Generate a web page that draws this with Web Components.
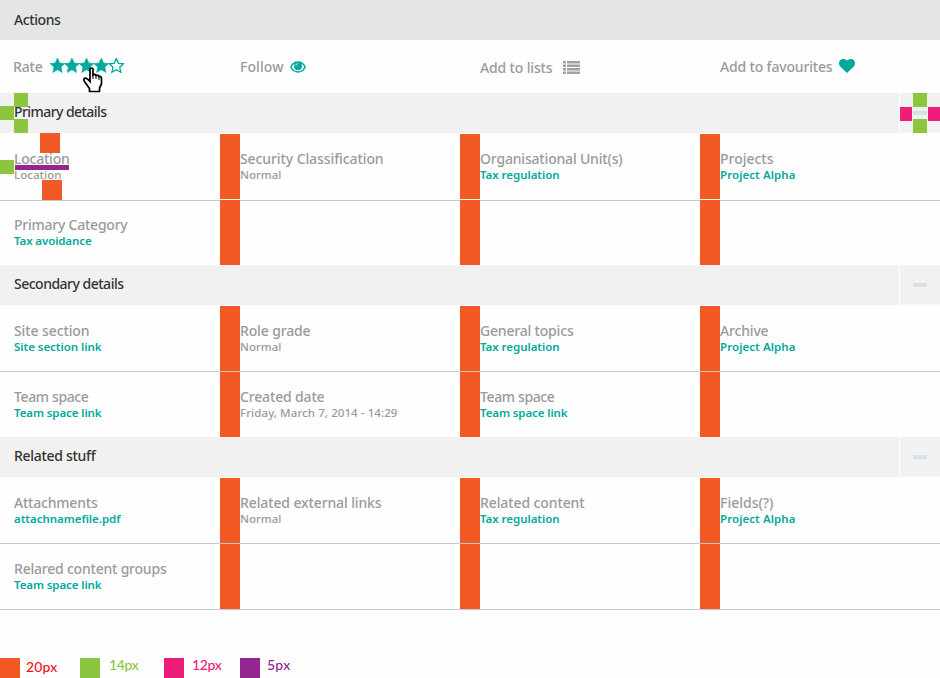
<!DOCTYPE html>
<html lang="en"><head><meta charset="utf-8"><title>Details</title>
<style>
body{margin:0;width:940px;height:678px;background:#fefefe;overflow:hidden;font-family:"Noto Sans","Open Sans",sans-serif}
</style></head><body>
<details-page></details-page>
<script>
const define=(name,html,setup)=>customElements.define(name,class extends HTMLElement{
  connectedCallback(){ if(this.shadowRoot)return;
    const t=document.createElement('template');
    t.innerHTML=typeof html==='function'?html(this):html;
    this.attachShadow({mode:'open'}).append(t.content.cloneNode(true));
    if(setup)setup(this);}
});

/* Text tracked to a given width */
define('fit-text',`<style>:host{display:block;white-space:nowrap;width:max-content}span{display:inline-block}</style><span><slot></slot></span>`,el=>{
  const w=+el.getAttribute('w'); if(!w)return;
  const s=el.shadowRoot.querySelector('span');
  const n=el.textContent.length;
  s.style.letterSpacing=((w-.5-s.getBoundingClientRect().width)/n).toFixed(3)+'px';
});

/* Action icons */
const star='M7.5 0 9.8 5 15 5.5 11.1 9.1 12.2 14.5 7.5 11.8 2.8 14.5 3.9 9.1 0 5.5 5.2 5Z';
const icons={
 stars:`<svg width="76" height="16" viewBox="0 0 76 16" fill="#00a99d">${[0,14.4,29,43.8].map(x=>`<path transform="translate(${x})" d="${star}" stroke="#00a99d" stroke-width=".5"/>`).join('')}<path transform="translate(59.3 .6) scale(.94)" d="${star}" fill="#fff" stroke="#00a99d" stroke-width="1.4"/></svg>`,
 eye:`<svg width="16" height="12" viewBox="0 0 16 12"><path d="M.8 6C2.4 2.9 5 1 8 1S13.6 2.9 15.2 6C13.6 9.2 11 11 8 11S2.4 9.2.8 6Z" fill="#fff" stroke="#00a99d" stroke-width="1.6"/><circle cx="8" cy="5.2" r="3.9" fill="#00a99d"/><path d="M5.8 4.9C5.8 3.5 6.7 2.7 8 2.7" fill="none" stroke="#fff" stroke-width=".8"/></svg>`,
 list:`<svg width="17" height="13" viewBox="0 0 17 13" fill="#a0a0a0"><path d="M0 0h3v2.500H0zM4 0h13v2.500H4zM0 3.500h3v2.500H0zM4 3.500h13v2.500H4zM0 7h3v2.500H0zM4 7h13v2.500H4zM0 10.500h3V13H0zM4 10.500h13V13H4z"/></svg>`,
 heart:`<svg width="16" height="14" viewBox="0 0 16 14" fill="#00a99d"><path d="M8 14 1.2 7.6C-.4 5.8-.4 3 1.100 1.300 3-.6 6-.3 8 1.600 10-.3 13-.6 14.900 1.300 16.400 3 16.400 5.800 14.800 7.600Z"/></svg>`
};
define('action-item',el=>`<style>:host{display:flex;align-items:flex-start;color:#9a9a9a;font-size:14px;font-weight:500;line-height:20px;box-sizing:border-box;padding-top:17px}
:host([low]){padding-top:18px}svg{display:block;margin-left:${el.getAttribute('gap')}px;margin-top:${el.getAttribute('drop')}px}</style><slot></slot>${icons[el.getAttribute('icon')]}`);

define('title-bar',`<style>:host{display:flex;height:40px;background:#e5e5e5;color:#333;padding-left:14px;font-size:14px;font-weight:500;line-height:20px;align-items:center}</style><slot></slot>`);

define('section-head',`<style>:host{position:relative;display:grid;grid-template-columns:899px 40px;gap:1px;height:40px;color:#333;font-size:14px;font-weight:500;line-height:20px}
.name{background:#f1f1f1;padding:9px 0 0 14px}.toggle{display:grid;place-items:center;background:#f1f1f1;border-bottom:1px solid #f7f7f7}
i{width:14px;height:4px;border-radius:1px;background:#d7e0e6}</style><div class="name"><slot></slot></div><div class="toggle"><i></i></div><slot name="marks"></slot>`);

define('detail-cell',`<style>:host{display:flex;height:66px;color:#9a9a9a}
.text{flex:1;padding-left:var(--inset,0);padding-top:18px}
::slotted(fit-text){font-size:14px;font-weight:500;line-height:16px;height:16px}
::slotted(fit-text.v){font-size:11.5px;line-height:14px;height:14px;margin-top:1px}
::slotted(fit-text.link){color:#00a99d;font-weight:560}
.bar{width:20px;background:#f15a24;margin-top:var(--bar-top,0)}
:host([last]) .bar{display:none}</style><div class="text"><slot></slot></div><div class="bar"></div>`);

define('detail-row',`<style>:host{display:grid;position:relative;grid-template-columns:240px 240px 240px 220px;height:66px}
:host([first]){--bar-top:1px}
:host([ruled])::before{content:"";position:absolute;left:0;right:0;top:0;height:1px;background:#c9c9c9}
:host([split])::before{top:1px;z-index:-1}:host([split]){--bar-top:1px}
::slotted(:first-child){--inset:14px}</style><slot></slot>`);

/* Spacing marker laid over the content it measures */
define('space-mark',el=>{const[x,y,w,h]=el.getAttribute('box').split(' ');return `<style>:host{position:absolute;left:${x}px;top:${y}px;width:${w}px;height:${h}px;background:${el.getAttribute('color')};z-index:var(--mark-z,auto)}</style>`});

define('legend-item',el=>`<style>:host{display:flex;height:20px;color:${el.getAttribute('text')};font:500 14px/20px Lato,sans-serif}
i{width:20px;height:20px;background:${el.getAttribute('color')};margin-right:${el.getAttribute('gap')}px}
div{margin-top:${el.getAttribute('shift')}px}</style><i></i><div><slot></slot></div>`);

define('hand-cursor',`<style>:host{position:absolute;left:83px;top:67px;width:20px;height:26px}svg{display:block}</style>
<svg width="20" height="26" viewBox="0 0 20 26"><path d="M7 2Q8.500 0 10 2V8Q12 6.500 13 8.500Q15 7.500 16 9.500Q18 9 18.500 11V17L16.500 21V24.500H6.500V21.500L1.500 14.500Q0 11.500 2 11.200Q4 11 7 14.500Z" fill="#fff" stroke="#000" stroke-width="1.7"/><path d="M10 7v5M13 8.500V12M16 9.500V13" stroke="#000" fill="none"/></svg>`);

const T=(s,w)=>`<fit-text w="${w}">${s}</fit-text>`;
const cells=list=>[0,1,2,3].map(i=>{const c=list[i];
 return `<detail-cell ${i===3?'last':''}>${c?T(c[0],c[1])+`<fit-text class="v ${c[4]?'':'link'}" w="${c[3]}">${c[2]}</fit-text>`:''}</detail-cell>`}).join('');
const row=(attrs,...l)=>`<detail-row ${attrs}>${cells(l)}</detail-row>`;
const G='#8cc63f',O='#f15a24',P='#ed1e79',V='#93278f';
const mark=(b,c)=>`<space-mark slot="marks" box="${b}" color="${c}"></space-mark>`;
define('details-page',`<style>:host{display:block;position:relative;width:940px;height:678px;isolation:isolate}
.actions{display:grid;grid-template-columns:240px 240px 240px 220px;height:53px}
.actions>:first-child{padding-left:13px}.end{height:49px;border-top:1px solid #c9c9c9;box-sizing:border-box}
.legend{display:grid;grid-template-columns:80px 84px 76px 1fr}</style>
<title-bar>${T('Actions',47)}</title-bar>
<div class="actions">
<action-item icon="stars" gap="7" drop="1">${T('Rate',30)}</action-item>
<action-item icon="eye" gap="6" drop="4">${T('Follow',44)}</action-item>
<action-item low icon="list" gap="10" drop="3">${T('Add to lists',73)}</action-item>
<action-item icon="heart" gap="6" drop="2">${T('Add to favourites',113)}</action-item></div>
<section-head>${T('Primary details',93)}${mark('14 0 14 14',G)}${mark('0 13 14 14',G)}${mark('14 26 14 14',G)}${mark('913 0 14 14',G)}${mark('913 26 14 14',G)}${mark('900 14 12 14',P)}${mark('928 14 12 14',P)}</section-head>
${row('first',['Location',56,'Location',48,1],['Security Classification',144,'Normal',42,1],['Organisational Unit(s)',143,'Tax regulation',80],['Projects',54,'Project Alpha',76])}
${row('ruled split',['Primary Category',114,'Tax avoidance',78])}
<section-head>${T('Secondary details',110)}</section-head>
${row('first',['Site section',76,'Site section link',88],['Role grade',71,'Normal',42,1],['General topics',94,'Tax regulation',80],['Archive',49,'Project Alpha',76])}
${row('ruled',['Team space',75,'Team space link',88],['Created date',85,'Friday, March 7, 2014 - 14:29',158,1],['Team space',75,'Team space link',88])}
<section-head>${T('Related stuff',82)}</section-head>
${row('first',['Attachments',84,'attachnamefile.pdf',107],['Related external links',142,'Normal',42,1],['Related content',105,'Tax regulation',80],['Fields(?)',54,'Project Alpha',76])}
${row('ruled',['Relared content groups',153,'Team space link',88])}
<div class="end"></div>
<div class="legend">
<legend-item color="${O}" text="#f01414" gap="6" shift="-1">${T('20px',32)}</legend-item>
<legend-item color="${G}" text="${G}" gap="9" shift="-3">${T('14px',30)}</legend-item>
<legend-item color="${P}" text="${P}" gap="8" shift="-3">${T('12px',30)}</legend-item>
<legend-item color="${V}" text="${V}" gap="7" shift="-3">${T('5px',24)}</legend-item></div>
${[['40 133 20 20',O],['42 180 20 20',O],['0 160 14 14',G],['15 165 54 5',V]].map(a=>mark(...a)).join('')}
<hand-cursor></hand-cursor>`);
</script></body></html>
